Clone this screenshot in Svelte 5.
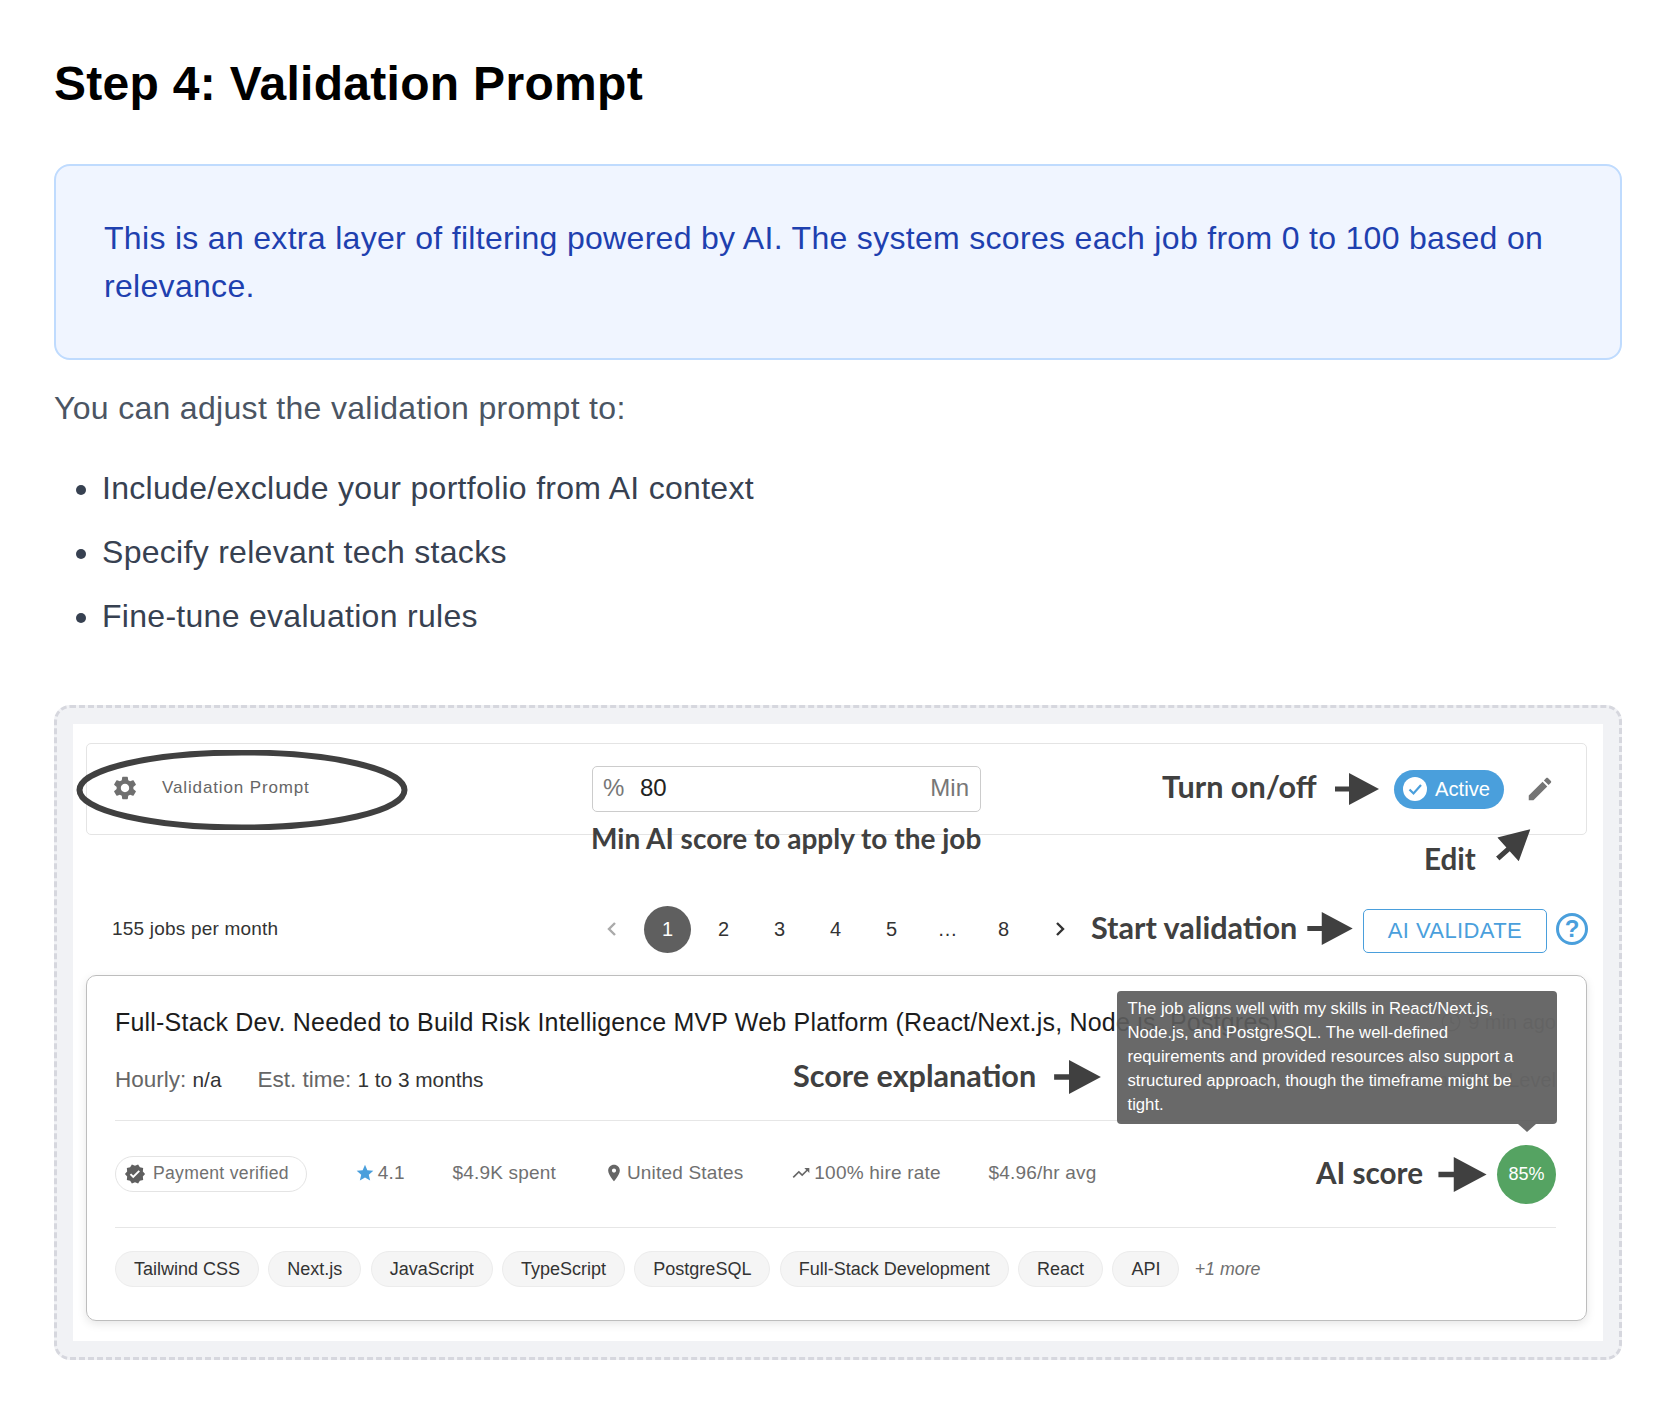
<script>
  const bullets = [
    'Include/exclude your portfolio from AI context',
    'Specify relevant tech stacks',
    'Fine-tune evaluation rules'
  ];
  const pages = ['2', '3', '4', '5', '...', '8'];
  const tags = ['Tailwind CSS', 'Next.js', 'JavaScript', 'TypeScript', 'PostgreSQL', 'Full-Stack Development', 'React', 'API'];
</script>

{#snippet arrow(cls)}
  <svg class="arrow {cls}" viewBox="0 0 44 32"><path d="M0 13.5h14V0l30 16-30 16V18.5H0z" /></svg>
{/snippet}

<main class="page">
  <h1>Step 4: Validation Prompt</h1>

  <div class="info">
    <p>This is an extra layer of filtering powered by AI. The system scores each job from 0 to 100 based on relevance.</p>
  </div>

  <p class="lead">You can adjust the validation prompt to:</p>
  <ul>
    {#each bullets as item}
      <li>{item}</li>
    {/each}
  </ul>

  <div class="figure">
    <div class="shot">
      <section class="prompt-card">
        <div class="prompt-name">
          <svg class="gear" viewBox="0 0 24 24"><path d="M19.14 12.94c.04-.3.06-.61.06-.94 0-.32-.02-.64-.07-.94l2.03-1.58c.18-.14.23-.41.12-.61l-1.92-3.32c-.12-.22-.37-.29-.59-.22l-2.39.96c-.5-.38-1.03-.7-1.62-.94l-.36-2.54c-.04-.24-.24-.41-.48-.41h-3.84c-.24 0-.43.17-.47.41l-.36 2.54c-.59.24-1.13.57-1.62.94l-2.39-.96c-.22-.08-.47 0-.59.22L2.74 8.87c-.12.21-.08.47.12.61l2.03 1.58c-.05.3-.09.63-.09.94s.02.64.07.94l-2.03 1.58c-.18.14-.23.41-.12.61l1.92 3.32c.12.22.37.29.59.22l2.39-.96c.5.38 1.03.7 1.62.94l.36 2.54c.05.24.24.41.48.41h3.84c.24 0 .44-.17.47-.41l.36-2.54c.59-.24 1.13-.56 1.62-.94l2.39.96c.22.08.47 0 .59-.22l1.92-3.32c.12-.22.07-.47-.12-.61l-2.01-1.58zM12 15.6c-1.98 0-3.6-1.62-3.6-3.6s1.62-3.6 3.6-3.6 3.6 1.62 3.6 3.6-1.62 3.6-3.6 3.6z" /></svg>
          <span>Validation Prompt</span>
        </div>
        <div class="score-input">
          <span class="unit">%</span>
          <span class="value">80</span>
          <span class="min">Min</span>
        </div>
        <div class="prompt-actions">
          <span class="active">
            <svg viewBox="0 0 24 24"><circle cx="12" cy="12" r="12" fill="#fff" /><path d="M6.5 12.5l4 4 7.5-8.5" fill="none" stroke="#4a9fdc" stroke-width="2.2" /></svg>
            Active
          </span>
          <svg class="pencil" viewBox="0 0 24 24"><path d="M3 17.25V21h3.75L17.81 9.94l-3.75-3.75L3 17.25zM20.71 7.04c.39-.39.39-1.02 0-1.41l-2.34-2.34c-.39-.39-1.02-.39-1.41 0l-1.83 1.83 3.75 3.75 1.83-1.83z" /></svg>
        </div>
      </section>

      <section class="toolbar">
        <span class="count">155 jobs per month</span>
        <nav class="pager">
          <span class="pg prev">
            <svg viewBox="0 0 24 24"><path d="M15 6l-6 6 6 6" /></svg>
          </span>
          <span class="pg current">1</span>
          {#each pages as page}
            <span class="pg">{page === '...' ? '…' : page}</span>
          {/each}
          <span class="pg next">
            <svg viewBox="0 0 24 24"><path d="M9 6l6 6-6 6" /></svg>
          </span>
        </nav>
        <button class="validate">AI VALIDATE</button>
        <span class="help">?</span>
      </section>

      <article class="job">
        <div class="job-head">
          <div class="title-row">
            <h2>Full-Stack Dev. Needed to Build Risk Intelligence MVP Web Platform (React/Next.js, Node.js, Postgres)</h2>
            <span class="ago">
              <svg viewBox="0 0 24 24"><circle cx="12" cy="12" r="9.5" /><path d="M12 6.5V12l3.5 2" /></svg>
              9 min ago
            </span>
          </div>
          <div class="terms">
            <span class="term">Hourly: <b>n/a</b></span>
            <span class="term">Est. time: <b>1 to 3 months</b></span>
            <span class="level">Intermediate Level</span>
          </div>
        </div>

        <div class="meta">
          <span class="verified">
            <svg viewBox="0 0 24 24"><path d="M23 12l-2.44-2.78.34-3.68-3.61-.82-1.89-3.18L12 3 8.6 1.54 6.71 4.72l-3.61.81.34 3.68L1 12l2.44 2.78-.34 3.69 3.61.82 1.89 3.18L12 21l3.4 1.46 1.89-3.18 3.61-.82-.34-3.68L23 12zm-12.91 4.72l-3.8-3.81 1.48-1.48 2.32 2.33 5.85-5.87 1.48 1.48-7.33 7.35z" /></svg>
            Payment verified
          </span>
          <span class="stat">
            <svg class="star" viewBox="0 0 24 24"><path d="M12 17.27L18.18 21l-1.64-7.03L22 9.24l-7.19-.61L12 2 9.19 8.63 2 9.24l5.46 4.73L5.82 21z" /></svg>
            4.1
          </span>
          <span class="stat">$4.9K spent</span>
          <span class="stat">
            <svg viewBox="0 0 24 24"><path d="M12 2C8.13 2 5 5.13 5 9c0 5.25 7 13 7 13s7-7.75 7-13c0-3.87-3.13-7-7-7zm0 9.5c-1.38 0-2.5-1.12-2.5-2.5s1.12-2.5 2.5-2.5 2.5 1.12 2.5 2.5-1.12 2.5-2.5 2.5z" /></svg>
            United States
          </span>
          <span class="stat">
            <svg viewBox="0 0 24 24"><path d="M16 6l2.29 2.29-4.88 4.88-4-4L2 16.59 3.41 18l6-6 4 4 6.3-6.29L22 12V6z" /></svg>
            100% hire rate
          </span>
          <span class="stat">$4.96/hr avg</span>
          <span class="ai-score">85%</span>
        </div>

        <div class="tags">
          {#each tags as tag}
            <span class="tag">{tag}</span>
          {/each}
          <em>+1 more</em>
        </div>

        <div class="tooltip">
          The job aligns well with my skills in React/Next.js, Node.js, and PostgreSQL. The well-defined requirements and provided resources also support a structured approach, though the timeframe might be tight.
        </div>
      </article>

      <svg class="ring" viewBox="0 0 332 80"><ellipse cx="166" cy="40" rx="162.5" ry="37.5" /></svg>

      <span class="note n-turn">Turn on/off</span>
      {@render arrow('a-turn')}
      <span class="note n-min">Min AI score to apply to the job</span>
      <span class="note n-edit">Edit</span>
      {@render arrow('a-edit')}
      <span class="note n-start">Start validation</span>
      {@render arrow('a-start')}
      <span class="note n-score">Score explanation</span>
      {@render arrow('a-score')}
      <span class="note n-ai">AI score</span>
      {@render arrow('a-ai')}
    </div>
  </div>
</main>

<style>
  :global(body) {
    background: #fff;
    font-family: "Liberation Sans", Arial, sans-serif;
  }

  .page {
    padding: 55px 36px 46px 54px;
  }

  h1 {
    margin: 0 0 51px;
    font-size: 48px;
    line-height: 58px;
    font-weight: 700;
    letter-spacing: 0.3px;
    color: #000;
  }

  .info {
    padding: 48px;
    background: #f0f5ff;
    border: 2px solid #bfdbfe;
    border-radius: 16px;
  }

  .info p {
    margin: 0;
    font-size: 32px;
    line-height: 48px;
    letter-spacing: 0.31px;
    color: #1e40af;
  }

  .lead {
    margin: 24px 0 32px;
    font-size: 32px;
    line-height: 48px;
    letter-spacing: 0.31px;
    color: #4b5563;
  }

  ul {
    margin: 0 0 65px;
    padding: 0 0 0 48px;
  }

  li {
    margin-bottom: 16px;
    font-size: 32px;
    line-height: 48px;
    letter-spacing: 0.29px;
    color: #374151;
  }

  .figure {
    padding: 16px;
    background: #f1f2f5;
    border: 3px dashed #d6d7de;
    border-radius: 16px;
  }

  .shot {
    position: relative;
    padding: 19px 16px 20px 13px;
    background: #fff;
  }

  .prompt-card {
    display: flex;
    align-items: center;
    height: 92px;
    box-sizing: border-box;
    border: 1px solid #e4e4e4;
    border-radius: 5px;
  }

  .prompt-name {
    display: flex;
    align-items: center;
    gap: 23px;
    width: 505px;
    box-sizing: border-box;
    padding: 0 0 2px 24px;
    font-size: 17px;
    letter-spacing: 0.87px;
    color: #666;
  }

  .gear {
    width: 28px;
    height: 28px;
    fill: #6f6f6f;
  }

  .score-input {
    display: flex;
    align-items: center;
    width: 389px;
    height: 46px;
    padding: 0 11px 2px 10px;
    box-sizing: border-box;
    border: 1.5px solid #ccc;
    border-radius: 5px;
    font-size: 24px;
    color: #222;
  }

  .unit {
    width: 37px;
    color: #777;
  }

  .min {
    margin-left: auto;
    color: #777;
  }

  .prompt-actions {
    display: flex;
    align-items: center;
    gap: 21px;
    margin-left: auto;
    padding-right: 31px;
  }

  .active {
    display: flex;
    align-items: center;
    gap: 8px;
    height: 39px;
    padding: 0 14px 0 9px;
    background: #4a9fdc;
    border-radius: 20px;
    font-size: 20.2px;
    color: #fff;
  }

  .active svg {
    width: 24px;
    height: 24px;
  }

  .pencil {
    width: 30px;
    height: 30px;
    fill: #757575;
  }

  .toolbar {
    display: flex;
    align-items: center;
    height: 48px;
    margin: 70px -1px 0 0;
    padding-left: 26px;
  }

  .count {
    width: 471.5px;
    font-size: 19px;
    letter-spacing: 0.2px;
    color: #333;
  }

  .pager {
    display: flex;
    align-items: center;
  }

  .pg {
    display: flex;
    align-items: center;
    justify-content: center;
    width: 56px;
    height: 47px;
    font-size: 20px;
    color: #333;
  }

  .pg svg {
    width: 24px;
    height: 24px;
    fill: none;
    stroke-width: 2.4;
  }

  .prev svg {
    stroke: #aaa;
  }

  .next svg {
    stroke: #333;
  }

  .current {
    position: relative;
    z-index: 0;
    color: #fff;
  }

  .current::before {
    content: "";
    position: absolute;
    z-index: -1;
    left: 4px;
    width: 47px;
    height: 47px;
    background: #5f5f5f;
    border-radius: 50%;
  }

  .validate {
    width: 184px;
    height: 44px;
    margin: 4px 0 0 auto;
    background: #fff;
    border: 1.5px solid #4a9fdc;
    border-radius: 5px;
    font-family: inherit;
    font-size: 22px;
    letter-spacing: 0.4px;
    color: #4a9fdc;
  }

  .help {
    display: flex;
    align-items: center;
    justify-content: center;
    width: 26px;
    height: 26px;
    margin: 0 0 0 9px;
    border: 3px solid #4a9fdc;
    border-radius: 50%;
    font-size: 24px;
    font-weight: 700;
    color: #4a9fdc;
  }

  .job {
    position: relative;
    margin-top: 22px;
    padding: 0 30px 0 28px;
    height: 346px;
    box-sizing: border-box;
    border: 1.5px solid #bdbdbd;
    border-radius: 10px;
    box-shadow: 0 3px 10px rgba(0, 0, 0, 0.1);
  }

  .job-head {
    padding: 29px 0 25px;
    border-bottom: 1.5px solid #e6e6e6;
  }

  .title-row {
    display: flex;
    justify-content: space-between;
    align-items: center;
    height: 34px;
  }

  h2 {
    margin: 0;
    font-size: 25px;
    font-weight: 400;
    letter-spacing: 0.2px;
    white-space: nowrap;
    color: #1c1c1c;
  }

  .ago {
    display: flex;
    align-items: center;
    gap: 6px;
    font-size: 20px;
    white-space: nowrap;
    color: #b5b5b5;
  }

  .ago svg {
    width: 22px;
    height: 22px;
    fill: none;
    stroke: #b5b5b5;
    stroke-width: 1.6;
  }

  .terms {
    display: flex;
    align-items: center;
    gap: 36px;
    height: 30px;
    margin-top: 26px;
  }

  .term {
    font-size: 22.5px;
    color: #666;
  }

  .term b {
    font-size: 20.8px;
    font-weight: 400;
    color: #333;
  }

  .level {
    margin-left: auto;
    font-size: 20px;
    color: #b5b5b5;
  }

  .meta {
    display: flex;
    align-items: center;
    gap: 47.8px;
    height: 106px;
    border-bottom: 1.5px solid #e6e6e6;
    font-size: 19px;
    letter-spacing: 0.2px;
    color: #707070;
  }

  .verified {
    display: flex;
    align-items: center;
    gap: 7px;
    height: 36px;
    padding: 0 17px 1px 8px;
    box-sizing: border-box;
    border: 1.5px solid #e4e4e4;
    border-radius: 18px;
    font-size: 17.6px;
    letter-spacing: 0.3px;
  }

  .verified svg {
    width: 22px;
    height: 22px;
    fill: #5f5f5f;
  }

  .stat {
    display: flex;
    align-items: center;
    gap: 3px;
    margin-top: -2px;
  }

  .stat svg {
    width: 20px;
    height: 20px;
    fill: #666;
  }

  .stat svg.star {
    fill: #4a9fdc;
  }

  .ai-score {
    display: flex;
    align-items: center;
    justify-content: center;
    width: 59px;
    height: 59px;
    margin-left: auto;
    background: #55a362;
    border-radius: 50%;
    font-size: 18px;
    letter-spacing: 0;
    color: #fff;
  }

  .tags {
    display: flex;
    align-items: center;
    gap: 9.3px;
    padding-top: 23px;
  }

  .tag {
    display: flex;
    align-items: center;
    height: 36px;
    padding: 0 18px;
    box-sizing: border-box;
    background: #f5f5f5;
    border: 1px solid #ececec;
    border-radius: 18px;
    font-size: 18px;
    color: #333;
  }

  .tags em {
    margin-left: 6px;
    font-size: 17.8px;
    color: #707070;
  }

  .tooltip {
    position: absolute;
    top: 15px;
    right: 29.5px;
    width: 440px;
    height: 133px;
    padding: 5.6px 30px 0 11px;
    box-sizing: border-box;
    background: rgba(92, 92, 92, 0.92);
    border-radius: 4px;
    font-size: 16.7px;
    line-height: 24.2px;
    color: #fff;
  }

  .tooltip::after {
    content: "";
    position: absolute;
    bottom: -8px;
    right: 21px;
    border-left: 9px solid transparent;
    border-right: 9px solid transparent;
    border-top: 8px solid rgba(92, 92, 92, 0.92);
  }

  .ring {
    position: absolute;
    left: 3px;
    top: 26px;
    width: 332px;
    height: 80px;
    fill: none;
    stroke: #404040;
    stroke-width: 6;
  }

  .note {
    position: absolute;
    font-family: Lato, "Open Sans", sans-serif;
    font-size: 30.6px;
    line-height: 36px;
    font-weight: 700;
    white-space: nowrap;
    color: #404040;
  }

  .arrow {
    position: absolute;
    width: 44px;
    height: 32px;
    fill: #404040;
  }

  .n-turn { left: 1089px; top: 45px; }
  .a-turn { left: 1262px; top: 49px; }
  .n-min { left: 518px; top: 96px; font-size: 28px; }
  .n-edit { left: 1351px; top: 117px; font-size: 29.6px; }
  .a-edit { left: 1419px; top: 104px; transform: rotate(-42deg); }
  .n-start { left: 1018px; top: 186px; }
  .a-start { left: 1234px; top: 188px; width: 46px; height: 33px; }
  .n-score { left: 720px; top: 334px; }
  .a-score { left: 981px; top: 336px; width: 47px; height: 34px; }
  .n-ai { left: 1243px; top: 431px; font-size: 29.6px; }
  .a-ai { left: 1365px; top: 433px; width: 49px; height: 35px; }
</style>
